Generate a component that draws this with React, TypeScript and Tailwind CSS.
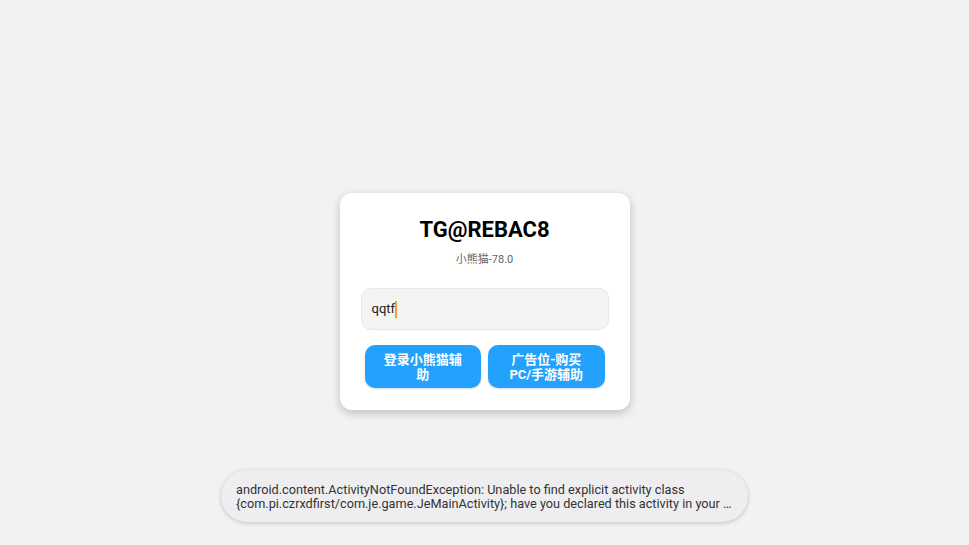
export default function App() {
  return (
    <div
      className="relative h-[545px] w-full bg-[#f2f2f2] flex items-center justify-center pt-[58px]"
      style={{ fontFamily: 'Roboto, "Noto Sans CJK SC", sans-serif' }}
    >
      <div className="w-[290px] bg-white rounded-[12px] shadow-[0_3px_10px_rgba(0,0,0,0.22)] px-[21px] pt-[24px] pb-[22px] flex flex-col items-center">
        <div className="text-[22px] leading-[26px] font-bold text-black">TG@REBAC8</div>
        <div className="mt-[10px] text-[11px] leading-[13px] text-[#666]">小熊猫-78.0</div>
        <div className="mt-[22px] w-full h-[42px] rounded-[10px] bg-[#f4f4f4] border border-[#e8e8e8] flex items-center pl-[10px] text-[13px] text-[#222]">
          <span>qqtf</span>
          <span className="inline-block w-[2px] h-[17px] bg-[#f0a030]" />
        </div>
        <div className="mt-[15px] w-full px-[4px] flex gap-[7px]">
          <button className="flex-1 h-[43px] rounded-[10px] bg-[#22a2fd] text-white text-[13px] leading-[15px] font-bold px-[14px] shadow-[0_1px_2px_rgba(0,0,0,0.15)]">
            登录小熊猫辅助
          </button>
          <button className="flex-1 h-[43px] rounded-[10px] bg-[#22a2fd] text-white text-[13px] leading-[15px] font-bold px-[14px] shadow-[0_1px_2px_rgba(0,0,0,0.15)]">
            广告位-购买PC/手游辅助
          </button>
        </div>
      </div>
      <div className="absolute left-[221px] top-[470px] w-[527px] h-[52px] rounded-full bg-[#eeeef1] shadow-[0_1px_4px_rgba(0,0,0,0.2)] flex flex-col justify-center pl-[15px] pr-[10px] pt-[2px] text-[12.7px] leading-[14.5px] text-[#333]">
        <div className="whitespace-nowrap">android.content.ActivityNotFoundException: Unable to find explicit activity class</div>
        <div className="whitespace-nowrap">{'{com.pi.czrxdfirst/com.je.game.JeMainActivity}; have you declared this activity in your …'}</div>
      </div>
    </div>
  );
}
